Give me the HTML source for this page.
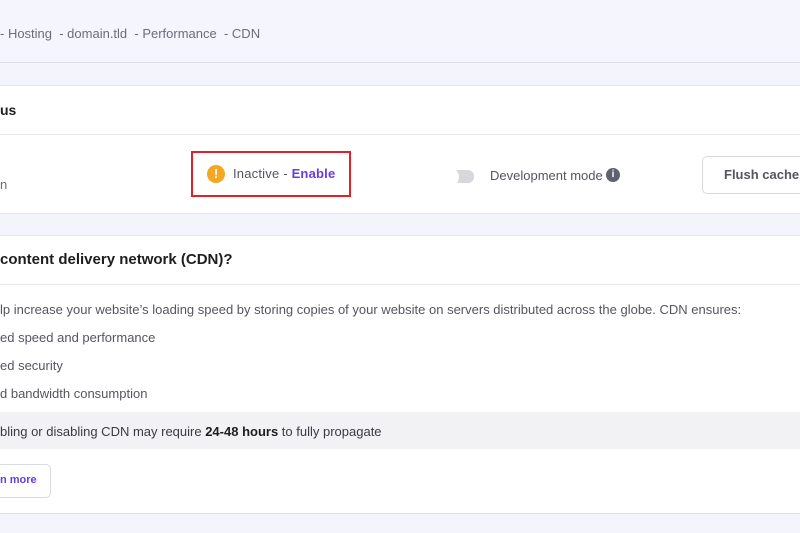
<!DOCTYPE html>
<html><head><style>
body{margin:0;width:800px;height:533px;background:#f4f5fc;font-family:"Liberation Sans",sans-serif;position:relative;overflow:hidden;color:#2f1c6a}
div,span{position:absolute}
.t{white-space:nowrap}
</style></head><body>
<div style="left:0;top:0;width:800px;height:62px;background:#f4f5fd;border-bottom:1px solid #dcdde6"></div>
<div class="t" style="left:0;top:26px;font-size:13px;color:#6d6d7a">- Hosting &nbsp;- domain.tld &nbsp;- Performance &nbsp;- CDN</div>

<div style="left:0;top:85px;width:800px;height:127px;background:#fff;border-top:1px solid #e6e6ee;border-bottom:1px solid #e6e6ee"></div>
<div style="left:0;top:134px;width:800px;height:1px;background:#e8e8ee"></div>
<div class="t" style="left:0;top:102px;font-size:14px;font-weight:bold;color:#1d1e20">us</div>
<div class="t" style="left:0;top:177px;font-size:13px;color:#6d6d7a">n</div>
<div style="left:191px;top:151px;width:160px;height:46px;border:2px solid #e0202a;box-sizing:border-box"></div>
<div style="left:207px;top:165px;width:18px;height:18px;border-radius:50%;background:#f5a623;color:#fff;font-size:13px;font-weight:bold;text-align:center;line-height:18px">!</div>
<div class="t" style="left:233px;top:166px;font-size:13px;color:#55555f;letter-spacing:0.2px">Inactive - <b style="color:#673de6">Enable</b></div>
<div style="left:450px;top:170px;width:24px;height:13px;border-radius:6px;background:#d8d8dc"></div>
<div style="left:441px;top:168px;width:18px;height:18px;border-radius:50%;background:#fff"></div>
<div class="t" style="left:490px;top:168px;font-size:13px;color:#55555f">Development mode</div>
<div style="left:606px;top:168px;width:14px;height:14px;border-radius:50%;background:#5f6070;color:#fff;font-size:10px;font-weight:bold;text-align:center;line-height:14px">i</div>
<div style="left:702px;top:156px;width:110px;height:36px;border:1px solid #dadae2;border-radius:5px;background:#fff"></div>
<div class="t" style="left:724px;top:167px;font-size:13px;font-weight:bold;color:#55555f">Flush cache</div>

<div style="left:0;top:235px;width:800px;height:277px;background:#fff;border-top:1px solid #e6e6ee;border-bottom:1px solid #e0e0ea"></div>
<div style="left:0;top:284px;width:800px;height:1px;background:#e8e8ee"></div>
<div class="t" style="left:0;top:251px;font-size:15px;font-weight:bold;color:#1d1e20">content delivery network (CDN)?</div>
<div class="t" style="left:0;top:302px;font-size:13px;color:#55555f">lp increase your website’s loading speed by storing copies of your website on servers distributed across the globe. CDN ensures:</div>
<div class="t" style="left:0;top:330px;font-size:13px;color:#55555f">ed speed and performance</div>
<div class="t" style="left:0;top:358px;font-size:13px;color:#55555f">ed security</div>
<div class="t" style="left:0;top:386px;font-size:13px;color:#55555f">d bandwidth consumption</div>
<div style="left:0;top:412px;width:800px;height:37px;background:#f2f2f4"></div>
<div class="t" style="left:0;top:424px;font-size:13px;color:#3a3a44">bling or disabling CDN may require <b style="color:#1d1e20">24-48 hours</b> to fully propagate</div>
<div style="left:-10px;top:464px;width:59px;height:32px;border:1px solid #dadae2;border-radius:5px;background:#fff"></div>
<div class="t" style="left:0;top:474px;font-size:11px;font-weight:bold;color:#673de6">n more</div>
</body></html>
